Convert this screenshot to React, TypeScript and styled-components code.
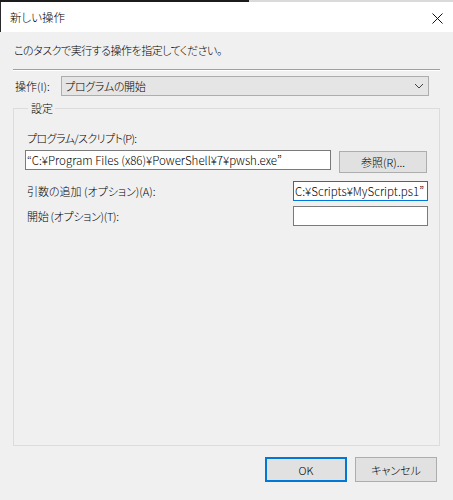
import React from "react";
import styled, { createGlobalStyle } from "styled-components";

const GlobalStyle = createGlobalStyle`
  html, body {
    margin: 0;
    padding: 0;
    background: #f0f0f0;
  }
  body {
    font-family: "Noto Sans CJK JP", "Noto Sans", sans-serif;
    font-size: 11px;
    font-weight: 300;
    color: #000;
    font-feature-settings: "palt" 1;
  }
  * { box-sizing: border-box; }
`;

const Window = styled.div`
  width: 453px;
  height: 500px;
  display: flex;
  flex-direction: column;
  overflow: hidden;
`;

const TopStrip = styled.div`
  height: 2px;
  display: flex;
`;

const StripSeg = styled.div<{ $dark?: boolean }>`
  height: 100%;
  background: ${(p) => (p.$dark ? "#1c1c1c" : "#dadada")};
  ${(p) => (p.$dark ? "width: 249px;" : "flex: 1;")}
`;

const TitleBar = styled.div`
  height: 30px;
  background: #ffffff;
  display: flex;
  align-items: center;
  justify-content: space-between;
  padding: 0 10px 0 9px;
  border-left: 1px solid #2a2a2a;
`;

const TitleText = styled.span`
  line-height: 16px;
  font-size: 11.5px;
  margin-top: -1px;
`;

const CloseGlyph = styled.svg`
  width: 11px;
  height: 11px;
  margin-top: 2px;
`;

const Body = styled.div`
  flex: 1;
  display: flex;
  flex-direction: column;
  padding: 10px 13px 18px 13px;
  background: #f0f0f0;
`;

const Instruction = styled.div`
  line-height: 16px;
  padding-left: 1px;
  letter-spacing: -0.5px;
`;

const Separator = styled.div`
  margin-top: 11px;
  border-top: 1px solid #a0a0a0;
  border-bottom: 1px solid #ffffff;
`;

const ActionRow = styled.div`
  margin-top: 5px;
  height: 20px;
  display: flex;
  align-items: center;
  padding-left: 2px;
`;

const ActionLabel = styled.span`
  width: 46px;
  line-height: 16px;
`;

const Combo = styled.div`
  width: 368px;
  height: 20px;
  background: #e5e5e5;
  border: 1px solid #adadad;
  display: flex;
  align-items: center;
  justify-content: space-between;
  padding: 0 3px 0 3px;
`;

const ComboText = styled.span`
  line-height: 16px;
  letter-spacing: -0.3px;
`;

const Chevron = styled.svg`
  width: 10px;
  height: 6px;
  margin-right: 1px;
`;

const Group = styled.fieldset`
  flex: 1;
  margin: 4px 0 0 0;
  padding: 14px 11px 0 11px;
  border: 1px solid #dcdcdc;
  min-width: 0;
  display: flex;
  flex-direction: column;
`;

const Legend = styled.legend`
  padding: 0 2px 0 3px;
  margin-left: 3px;
  line-height: 16px;
`;

const FieldLabel = styled.div<{ $ls?: number }>`
  line-height: 16px;
  padding-left: 2px;
  letter-spacing: ${(p) => p.$ls ?? 0}px;
`;

const Row = styled.div<{ $mt: number }>`
  display: flex;
  align-items: center;
  justify-content: space-between;
  margin-top: ${(p) => p.$mt}px;
`;

const TopRow = styled.div`
  display: flex;
  align-items: flex-start;
  gap: 8px;
  margin-top: 4px;
  height: 23px;
`;

const Field = styled.input<{ $w: number; $focused?: boolean }>`
  width: ${(p) => p.$w}px;
  height: 20px;
  background: #ffffff;
  border: 1px solid ${(p) => (p.$focused ? "#0078d7" : "#7a7a7a")};
  padding: 0 1px;
  margin: 0;
  font-family: "Noto Sans CJK JP", "Noto Sans", sans-serif;
  font-feature-settings: "palt" 1;
  font-size: 11.5px;
  font-weight: 300;
  color: #000;
  outline: none;
  border-radius: 0;
`;

const Button = styled.button<{ $w: number; $h: number; $primary?: boolean }>`
  width: ${(p) => p.$w}px;
  height: ${(p) => p.$h}px;
  background: #e1e1e1;
  border: ${(p) => (p.$primary ? "2px solid #0078d7" : "1px solid #adadad")};
  border-radius: 0;
  padding: 0;
  margin: 0;
  font-family: "Noto Sans CJK JP", "Noto Sans", sans-serif;
  font-feature-settings: "palt" 1;
  font-size: 11px;
  font-weight: 300;
  color: #000;
  line-height: 16px;
`;

const BrowseButton = styled(Button)`
  margin-top: 1px;
`;

const Footer = styled.div`
  margin-top: 11px;
  display: flex;
  justify-content: flex-end;
  gap: 8px;
  padding-right: 3px;
`;

export default function App() {
  return (
    <>
      <GlobalStyle />
      <Window>
        <TopStrip>
          <StripSeg $dark />
          <StripSeg />
        </TopStrip>
        <TitleBar>
          <TitleText>新しい操作</TitleText>
          <CloseGlyph viewBox="0 0 11 11">
            <path d="M0.5 0.5 L10.5 10.5 M10.5 0.5 L0.5 10.5" stroke="#111" strokeWidth="1" fill="none" />
          </CloseGlyph>
        </TitleBar>
        <Body>
          <Instruction>このタスクで実行する操作を指定してください。</Instruction>
          <Separator />
          <ActionRow>
            <ActionLabel>操作(I):</ActionLabel>
            <Combo>
              <ComboText>プログラムの開始</ComboText>
              <Chevron viewBox="0 0 10 6">
                <path d="M1 1 L5 5 L9 1" stroke="#444" strokeWidth="1" fill="none" />
              </Chevron>
            </Combo>
          </ActionRow>
          <Group>
            <Legend>設定</Legend>
            <FieldLabel $ls={-0.6}>プログラム/スクリプト(P):</FieldLabel>
            <TopRow>
              <Field $w={306} readOnly value="“C:¥Program Files (x86)¥PowerShell¥7¥pwsh.exe”" />
              <BrowseButton $w={88} $h={22}>参照(R)...</BrowseButton>
            </TopRow>
            <Row $mt={8}>
              <FieldLabel>引数の追加 (オプション)(A):</FieldLabel>
              <Field $w={135} $focused readOnly value="C:¥Scripts¥MyScript.ps1”" />
            </Row>
            <Row $mt={5}>
              <FieldLabel $ls={-0.3}>開始 (オプション)(T):</FieldLabel>
              <Field $w={135} readOnly value="" />
            </Row>
          </Group>
          <Footer>
            <Button $w={82} $h={25} $primary>OK</Button>
            <Button $w={82} $h={25}>キャンセル</Button>
          </Footer>
        </Body>
      </Window>
    </>
  );
}
